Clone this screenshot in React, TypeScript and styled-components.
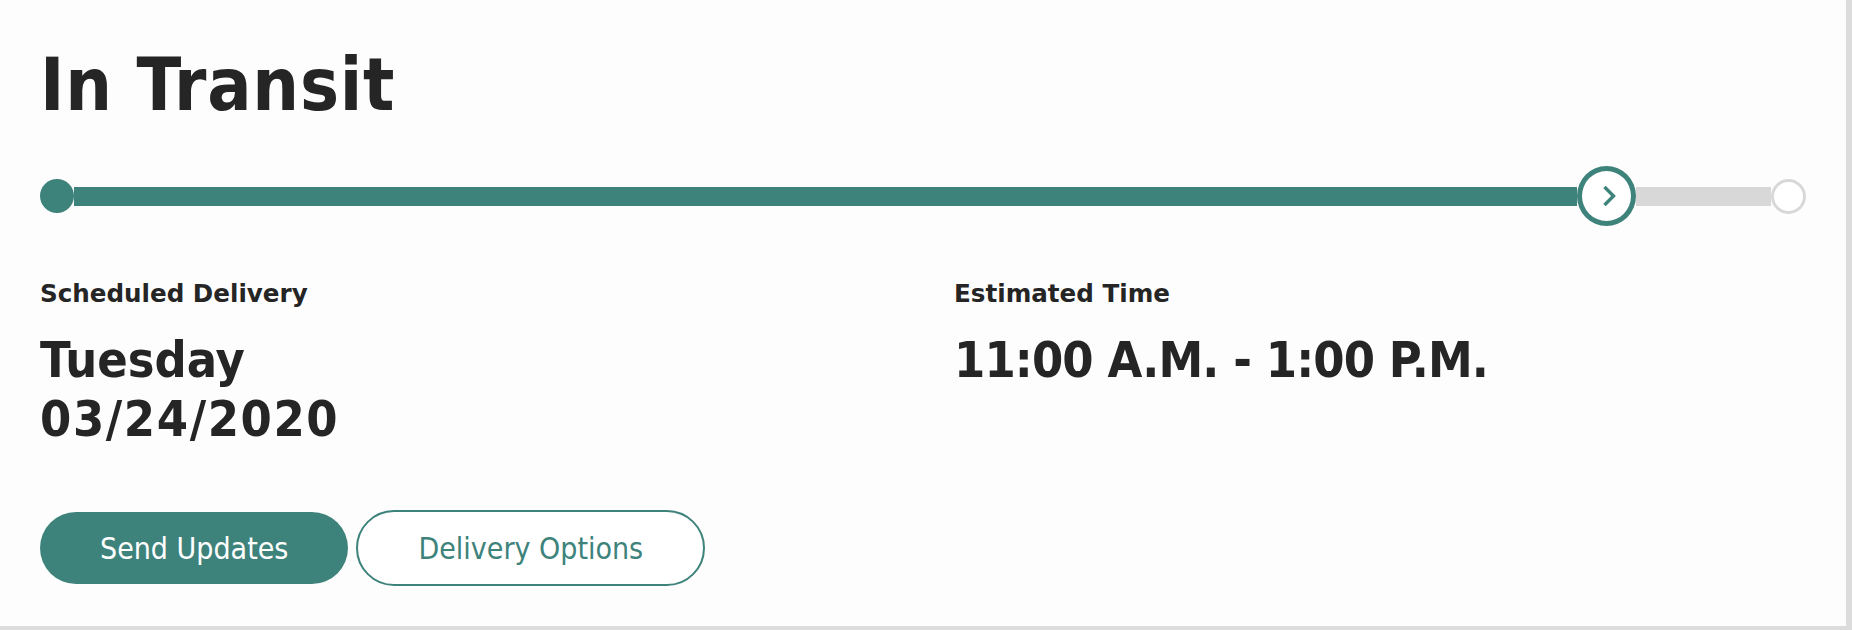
import styled, { createGlobalStyle } from 'styled-components';

const teal = '#3e837b';
const ink = '#252525';

const GlobalStyle = createGlobalStyle`
    body {
        margin: 0;
        background: #dcdcdc;
        font-family: "DejaVu Sans Condensed", "DejaVu Sans", sans-serif;
        color: ${ink};
    }
`;

export default function App() {
    return (
        <>
            <GlobalStyle />
            <Card>
                <Title>In Transit</Title>
                <Progress>
                    <StartDot />
                    <Bar $done />
                    <CurrentStep>
                        <svg width="16" height="24" viewBox="0 0 16 24">
                            <polyline
                                points="3.5,3 12.5,12 3.5,21"
                                fill="none"
                                stroke={teal}
                                strokeWidth="3.4"
                            />
                        </svg>
                    </CurrentStep>
                    <Bar $width={135} />
                    <EndDot />
                </Progress>
                <Details>
                    <div>
                        <Label>Scheduled Delivery</Label>
                        <Value>
                            Tuesday
                            <br />
                            <Spread>03/24/2020</Spread>
                        </Value>
                    </div>
                    <div>
                        <Label>Estimated Time</Label>
                        <Value $spacing={-0.9}>11:00 A.M. - 1:00 P.M.</Value>
                    </div>
                </Details>
                <Actions>
                    <Button $primary>Send Updates</Button>
                    <Button>Delivery Options</Button>
                </Actions>
            </Card>
        </>
    );
}

const Card = styled.div`
    box-sizing: border-box;
    width: 1846px;
    height: 626px;
    background: #fdfdfd;
    padding: 48px 40px 0 40px;
`;

const Title = styled.h1`
    margin: 0;
    font-size: 73px;
    line-height: 73px;
    font-weight: 700;
    letter-spacing: 0.8px;
`;

const Progress = styled.div`
    display: flex;
    align-items: center;
    height: 60px;
    margin-top: 45px;
`;

const StartDot = styled.span`
    width: 34px;
    height: 34px;
    border-radius: 50%;
    background: ${teal};
    flex: none;
`;

const Bar = styled.span<{ $done?: boolean; $width?: number }>`
    height: 19px;
    background: ${({ $done }) => ($done ? teal : '#d8d8d8')};
    flex: ${({ $width }) => ($width ? `0 0 ${$width}px` : '1')};
`;

const CurrentStep = styled.span`
    box-sizing: border-box;
    width: 59px;
    height: 60px;
    border-radius: 50%;
    border: 5px solid ${teal};
    background: #fff;
    display: flex;
    align-items: center;
    justify-content: center;
    flex: none;

    svg {
        margin-left: 5px;
    }
`;

const EndDot = styled.span`
    box-sizing: border-box;
    width: 35px;
    height: 35px;
    border-radius: 50%;
    border: 3px solid #d8d8d8;
    background: #fff;
    flex: none;
`;

const Details = styled.div`
    display: grid;
    grid-template-columns: 1fr 1fr;
    column-gap: 62px;
    margin-top: 53px;
`;

const Label = styled.div`
    font-family: "DejaVu Sans", sans-serif;
    font-size: 24.6px;
    line-height: 30px;
    font-weight: 700;
`;

const Value = styled.div<{ $spacing?: number }>`
    margin-top: 22px;
    font-size: 50px;
    line-height: 59px;
    font-weight: 700;
    letter-spacing: ${({ $spacing }) => $spacing ?? 0}px;
`;

const Spread = styled.span`
    letter-spacing: 1.6px;
`;

const Actions = styled.div`
    display: flex;
    align-items: center;
    gap: 8px;
    margin-top: 61px;
`;

const Button = styled.button<{ $primary?: boolean }>`
    box-sizing: border-box;
    height: ${({ $primary }) => ($primary ? '72px' : '76px')};
    padding: 0 60px;
    border-radius: 40px;
    border: ${({ $primary }) => ($primary ? 'none' : `2px solid ${teal}`)};
    background: ${({ $primary }) => ($primary ? teal : '#fff')};
    color: ${({ $primary }) => ($primary ? '#fff' : teal)};
    font-family: inherit;
    font-size: 30px;
    cursor: pointer;
`;
